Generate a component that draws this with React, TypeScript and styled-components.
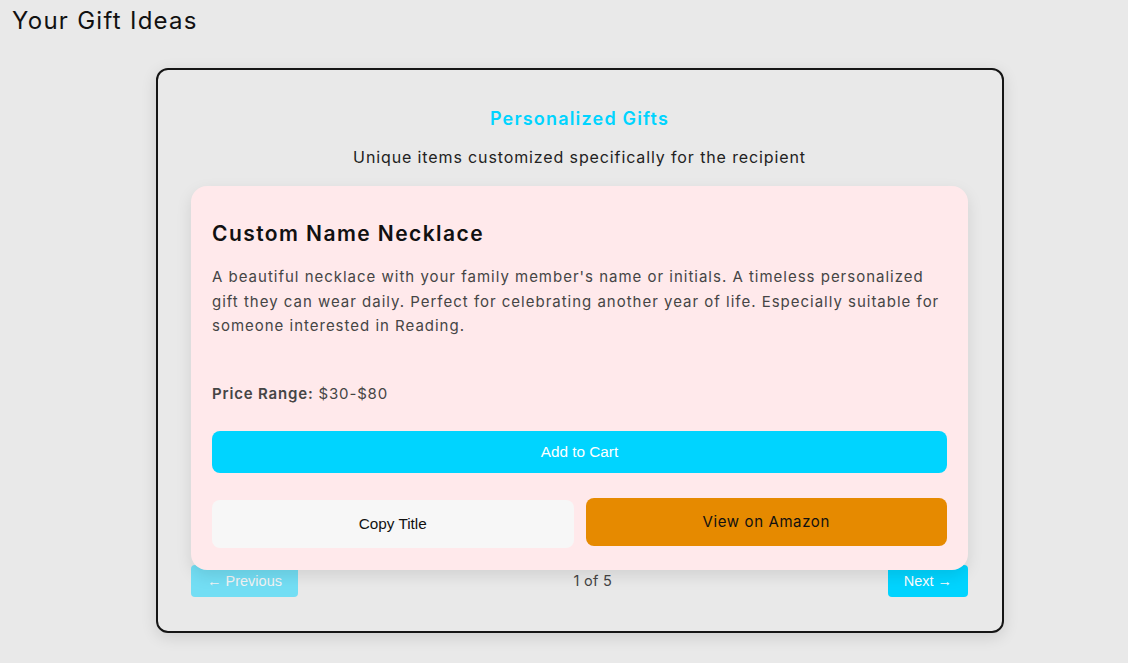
import React, { useState } from "react";
import styled, { createGlobalStyle } from "styled-components";

const GlobalStyle = createGlobalStyle`
  html, body {
    margin: 0;
    padding: 0;
    background: #e9e9e9;
    font-family: Inter, "Noto Sans", sans-serif;
    letter-spacing: 0.062em;
    color: #111;
  }
`;

const Page = styled.div`
  padding: 6px 0 30px 12px;
`;

const PageTitle = styled.h2`
  margin: 0;
  font-size: 24px;
  font-weight: 400;
  line-height: 30px;
  letter-spacing: 0.053em;
  color: #111;
`;

const Carousel = styled.section`
  box-sizing: border-box;
  width: 848px;
  margin: 32px 0 0 144px;
  padding: 38px 34px 34px 33px;
  border: 2px solid #151515;
  border-radius: 12px;
  box-shadow: 0 4px 16px rgba(0, 0, 0, 0.12);
  display: flex;
  flex-direction: column;
  align-items: stretch;
`;

const CategoryTitle = styled.h3`
  margin: 0;
  text-align: center;
  font-size: 18px;
  font-weight: 600;
  line-height: 22px;
  letter-spacing: 0.066em;
  color: #00d4ff;
`;

const CategoryText = styled.p`
  margin: 15px 0 17px;
  text-align: center;
  font-size: 16px;
  line-height: 24px;
  letter-spacing: 0.055em;
  color: #222;
`;

const Card = styled.article`
  position: relative;
  z-index: 1;
  margin-bottom: -5px;
  padding: 35px 21px 22px;
  background: #ffe9eb;
  border-radius: 16px;
  box-shadow: 0 6px 16px rgba(0, 0, 0, 0.1);
  display: flex;
  flex-direction: column;
`;

const GiftName = styled.h4`
  margin: 0;
  font-size: 21px;
  font-weight: 600;
  line-height: 26px;
  letter-spacing: 0.068em;
  color: #111;
`;

const GiftText = styled.p`
  margin: 18px 0 43px;
  font-size: 15px;
  line-height: 24.5px;
  letter-spacing: 0.066em;
  color: #454545;
`;

const Price = styled.p`
  margin: 0 0 25px;
  font-size: 15px;
  line-height: 24px;
  letter-spacing: 0.055em;
  color: #454545;

  strong {
    font-weight: 600;
  }
`;

const Button = styled.button<{ $tone: "cyan" | "light" | "orange" }>`
  border: none;
  border-radius: 8px;
  cursor: pointer;
  font-family: ${({ $tone }) =>
    $tone === "orange" ? 'Inter, "Noto Sans", sans-serif' : '"Liberation Sans", Arial, sans-serif'};
  font-size: ${({ $tone }) => ($tone === "orange" ? "15px" : "15.3px")};
  letter-spacing: ${({ $tone }) => ($tone === "orange" ? "0.04em" : "0")};
  background: ${({ $tone }) =>
    $tone === "cyan" ? "#00d4ff" : $tone === "orange" ? "#e68a00" : "#f7f7f7"};
  color: ${({ $tone }) => ($tone === "cyan" ? "#fff" : "#111")};
`;

const CartButton = styled(Button)`
  height: 42px;
  margin-bottom: 25px;
`;

const ActionRow = styled.div`
  display: grid;
  grid-template-columns: 1fr 1fr;
  gap: 12px;
  align-items: start;
`;

const CopyButton = styled(Button)`
  height: 48px;
  margin-top: 2px;
`;

const AmazonButton = styled(Button)`
  height: 48px;
`;

const Pager = styled.div`
  display: flex;
  align-items: flex-start;
  justify-content: space-between;
`;

const PageButton = styled.button<{ $disabled?: boolean }>`
  height: 32px;
  padding: 0 16px;
  border: none;
  border-radius: 4px;
  background: #00d4ff;
  opacity: ${({ $disabled }) => ($disabled ? 0.5 : 1)};
  color: #fff;
  font-family: "Liberation Sans", Arial, sans-serif;
  font-size: 14.5px;
  letter-spacing: 0;
  cursor: ${({ $disabled }) => ($disabled ? "default" : "pointer")};
`;

const Counter = styled.span`
  padding-top: 6px;
  font-size: 14.5px;
  line-height: 20px;
  letter-spacing: 0.02em;
  color: #444;
`;

const gifts = [
  {
    name: "Custom Name Necklace",
    text:
      "A beautiful necklace with your family member's name or initials. A timeless personalized gift they can wear daily. Perfect for celebrating another year of life. Especially suitable for someone interested in Reading.",
    price: "$30-$80",
  },
];

export default function App() {
  const [index] = useState(0);
  const gift = gifts[index];

  return (
    <Page>
      <GlobalStyle />
      <PageTitle>Your Gift Ideas</PageTitle>
      <Carousel>
        <CategoryTitle>Personalized Gifts</CategoryTitle>
        <CategoryText>Unique items customized specifically for the recipient</CategoryText>
        <Card>
          <GiftName>{gift.name}</GiftName>
          <GiftText>{gift.text}</GiftText>
          <Price>
            <strong>Price Range:</strong> {gift.price}
          </Price>
          <CartButton $tone="cyan">Add to Cart</CartButton>
          <ActionRow>
            <CopyButton $tone="light">Copy Title</CopyButton>
            <AmazonButton $tone="orange">View on Amazon</AmazonButton>
          </ActionRow>
        </Card>
        <Pager>
          <PageButton $disabled>← Previous</PageButton>
          <Counter>1 of 5</Counter>
          <PageButton>Next →</PageButton>
        </Pager>
      </Carousel>
    </Page>
  );
}
